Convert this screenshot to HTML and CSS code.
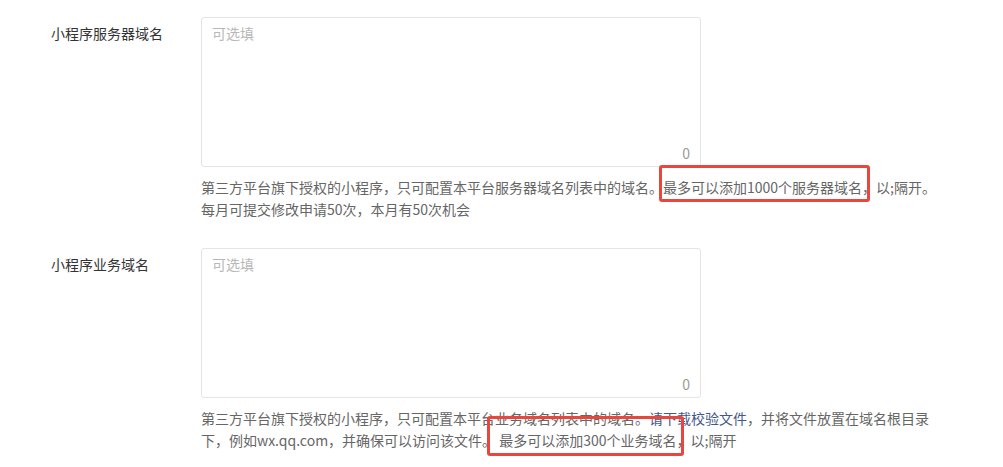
FILE: index.html
```html
<!DOCTYPE html>
<html lang="zh-CN">
<head>
    <meta charset="UTF-8">
    <title>服务器域名设置</title>
    <link rel="stylesheet" href="styles.css">
</head>
<body>
    <div class="form">
        <div class="form-row">
            <label class="form-label">小程序服务器域名</label>
            <div class="form-field">
                <div class="textarea-box">
                    <textarea placeholder="可选填"></textarea>
                    <span class="counter">0</span>
                </div>
                <p class="tips">第三方平台旗下授权的小程序，只可配置本平台服务器域名列表中的域名。<span class="mark mark-1">最多可以添加1000个服务器域名，</span>以;隔开。每月可提交修改申请50次，本月有50次机会</p>
            </div>
        </div>
        <div class="form-row">
            <label class="form-label">小程序业务域名</label>
            <div class="form-field">
                <div class="textarea-box">
                    <textarea placeholder="可选填"></textarea>
                    <span class="counter">0</span>
                </div>
                <p class="tips">第三方平台旗下授权的小程序，只可配置本平台业务域名列表中的域名。<a href="#">请下载校验文件</a>，并将文件放置在域名根目录下，例如wx.qq.com，并确保可以访问该文件。 <span class="mark mark-2">最多可以添加300个业务域名，</span>以;隔开</p>
            </div>
        </div>
    </div>
</body>
</html>
```

FILE: styles.css
```css
* {
    margin: 0;
    padding: 0;
    box-sizing: border-box;
}

body {
    font-family: "Noto Sans CJK SC", "Noto Sans", sans-serif;
    font-size: 14px;
    color: #333;
    background: #fff;
}

.form {
    padding: 17px 0 0 51px;
}

.form-row {
    display: flex;
    margin-bottom: 28px;
}

.form-label {
    width: 150px;
    flex-shrink: 0;
    padding-top: 6px;
    line-height: 20px;
    color: #333;
}

.form-field {
    width: 736px;
}

.textarea-box {
    position: relative;
    width: 500px;
    height: 150px;
}

.textarea-box textarea {
    display: block;
    width: 100%;
    height: 100%;
    resize: none;
    border: 1px solid #e4e4e4;
    border-radius: 3px;
    padding: 4px 10px;
    font-family: inherit;
    font-size: 14px;
    line-height: 22px;
    color: #333;
    outline: none;
}

.textarea-box textarea::placeholder {
    color: #b8b8b8;
}

.counter {
    position: absolute;
    right: 11px;
    bottom: 4px;
    color: #9a9a9a;
    font-size: 14px;
    line-height: 20px;
}

.tips {
    margin-top: 9px;
    line-height: 22px;
    color: #666;
}

.tips a {
    color: #44578a;
    text-decoration: none;
}

/* red annotation boxes */
.mark {
    position: relative;
}

.mark::after {
    content: "";
    position: absolute;
    border: 3px solid #e9473d;
    border-radius: 3px;
}

.mark-1::after {
    left: -4px;
    right: 6px;
    top: -12px;
    bottom: -5px;
}

.mark-2::after {
    left: -12px;
    right: 7px;
    top: -14px;
    bottom: -6px;
}
```
